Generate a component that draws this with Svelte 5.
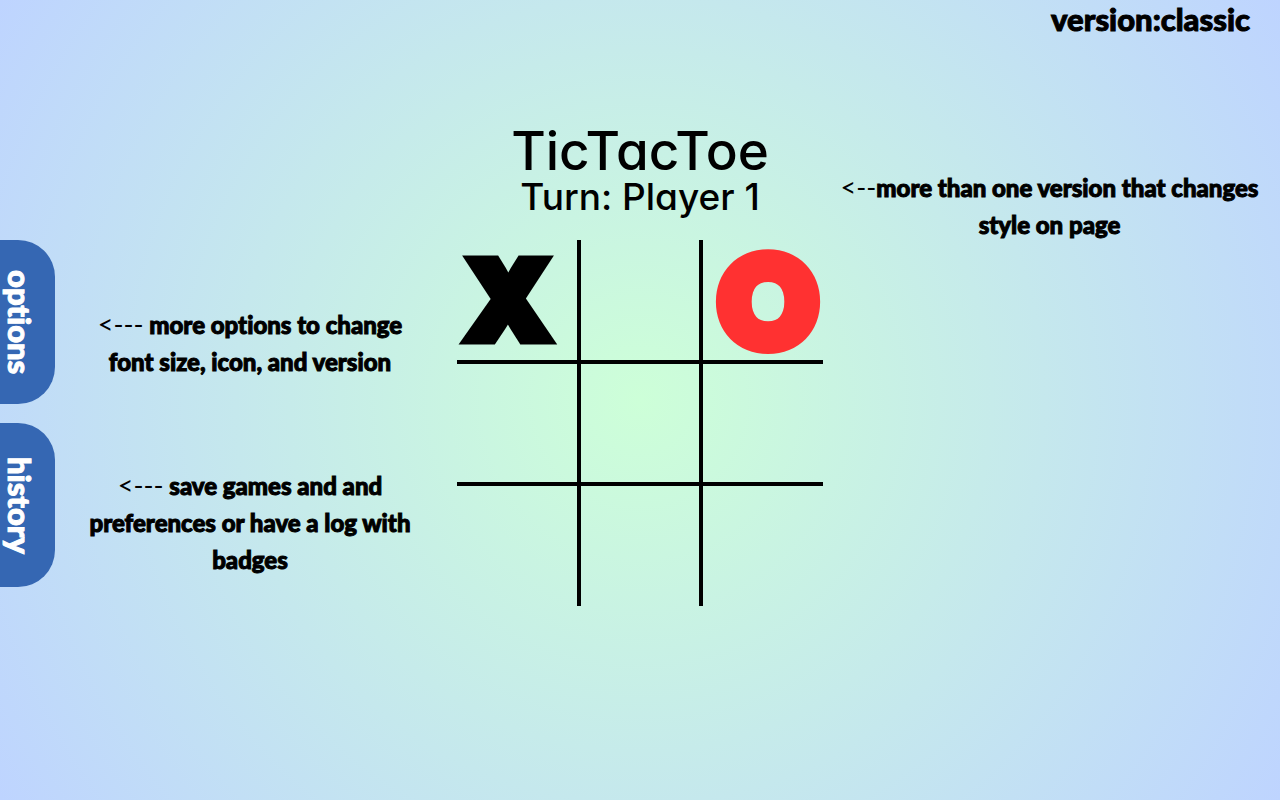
<script>
  const tabs = ['options', 'history'];
  let cells = $state(['X', '', 'O', '', '', '', '', '', '']);
  let turn = $state(1);

  function play(i) {
    if (cells[i]) return;
    cells[i] = turn === 1 ? 'X' : 'O';
    turn = turn === 1 ? 2 : 1;
  }
</script>

<div class="page">
  <header>version:classic</header>

  <main>
    <section class="side">
      <nav>
        {#each tabs as tab}
          <button class="tab" type="button">{tab}</button>
        {/each}
      </nav>
      <div class="notes">
        <p><span class="arrow">&lt;---</span> more options to change font size, icon, and version</p>
        <p><span class="arrow">&lt;---</span> save games and and preferences or have a log with badges</p>
      </div>
    </section>

    <section class="game">
      <h1>TicTacToe</h1>
      <h2>Turn: Player {turn}</h2>
      <div class="board">
        {#each cells as mark, i}
          <button class="cell" type="button" aria-label={mark ? undefined : `Square ${i + 1}`} onclick={() => play(i)}>
            {#if mark}<span class={mark === 'X' ? 'x' : 'o'}>{mark}</span>{/if}
          </button>
        {/each}
      </div>
    </section>

    <aside>
      <p><span class="arrow">&lt;--</span>more than one version that changes style on page</p>
    </aside>
  </main>
</div>

<style>
  :global(body) {
    margin: 0;
  }

  .page {
    box-sizing: border-box;
    min-height: 100vh;
    background: radial-gradient(circle farthest-corner at center, #cdffd8 0%, #bed4ff 100%);
    color: #000;
    font-family: Lato, "Liberation Sans", sans-serif;
    font-weight: 900;
    font-variant-ligatures: none;
    -webkit-text-stroke: 1px currentColor;
  }

  header {
    padding: 0 30px;
    font-size: 31px;
    line-height: 38px;
    text-align: right;
  }

  main {
    display: grid;
    grid-template-columns: 1fr 366px 1fr;
    padding-top: 86px;
  }

  .side {
    display: flex;
    padding-top: 116px;
  }

  nav {
    display: flex;
    flex-direction: column;
    gap: 19px;
  }

  .tab {
    box-sizing: border-box;
    width: 55px;
    height: 164px;
    padding: 0 16px 0 0;
    border: 0;
    border-radius: 0 37px 37px 0;
    background: #3567b3;
    color: #fff;
    font: inherit;
    font-size: 31px;
    line-height: 39px;
    text-align: center;
    writing-mode: vertical-rl;
    cursor: pointer;
  }

  .notes {
    display: flex;
    flex: 1;
    flex-direction: column;
    gap: 87px;
    padding: 66px 40px 0 28px;
  }

  aside {
    padding: 45px 14px 0 10px;
  }

  p {
    margin: 0;
    font-size: 24px;
    line-height: 37px;
    text-align: center;
  }

  .arrow {
    font-size: 27px;
    font-weight: 400;
    line-height: 1;
    -webkit-text-stroke: 0;
  }

  .game {
    text-align: center;
    font-family: Inter, "Liberation Sans", sans-serif;
    font-feature-settings: "cv11";
    -webkit-text-stroke: 0;
  }

  h1,
  h2 {
    margin: 0;
    font-weight: 500;
  }

  h1 {
    font-size: 53px;
    line-height: 54px;
  }

  h2 {
    font-size: 37px;
    line-height: 38px;
  }

  .board {
    display: grid;
    grid-template-rows: repeat(3, minmax(0, 1fr));
    grid-template-columns: repeat(3, minmax(0, 1fr));
    aspect-ratio: 1;
    margin-top: 24px;
  }

  .cell {
    display: flex;
    box-sizing: border-box;
    align-items: center;
    justify-content: center;
    padding: 0;
    border: 0 solid #000;
    background: none;
    color: inherit;
    font: inherit;
    font-weight: 900;
    line-height: 1;
    cursor: pointer;
  }

  .cell:not(:nth-child(3n)) {
    border-right-width: 2px;
  }

  .cell:not(:nth-child(3n + 1)) {
    border-left-width: 2px;
  }

  .cell:nth-child(-n + 6) {
    border-bottom-width: 2px;
  }

  .cell:nth-child(n + 4) {
    border-top-width: 2px;
  }

  .x {
    margin-right: 18px;
    font-size: 110px;
    -webkit-text-stroke: 9px #000;
  }

  .o {
    margin-left: 10px;
    color: #ff3131;
    font-family: Lato, "Liberation Sans", sans-serif;
    font-size: 116px;
    -webkit-text-stroke: 18px #ff3131;
  }
</style>
